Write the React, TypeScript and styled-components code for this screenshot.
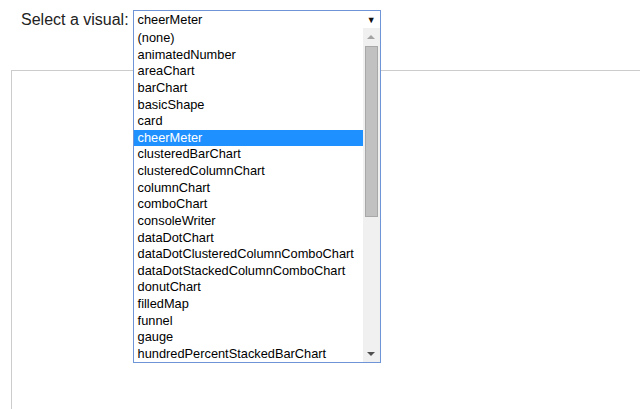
import React from "react";
import styled, { createGlobalStyle } from "styled-components";

const Global = createGlobalStyle`
  html, body { margin: 0; padding: 0; background: #fff; overflow: hidden; }
  body { font-family: "Liberation Sans", Arial, sans-serif; }
`;

const Page = styled.div`
  width: 640px;
  height: 409px;
  position: relative;
  overflow: hidden;
`;

const Header = styled.div`
  display: flex;
  align-items: flex-start;
  gap: 4px;
  padding: 10px 0 0 21px;
  height: 60px;
`;

const Label = styled.label`
  font-size: 16px;
  line-height: 19px;
  color: #222;
`;

const SelectWrap = styled.div`
  position: relative;
  width: 248px;
`;

const SelectBox = styled.div`
  box-sizing: border-box;
  height: 19px;
  border: 1px solid #6f95d6;
  display: flex;
  align-items: center;
  justify-content: space-between;
  padding: 0 4px 0 4px;
  font-size: 12.8px;
  color: #000;
`;

const Caret = styled.span`
  font-size: 9px;
  color: #111;
`;

const Dropdown = styled.div`
  position: absolute;
  left: 0;
  top: 18px;
  width: 248px;
  height: 335px;
  box-sizing: border-box;
  border: 1px solid #6f95d6;
  border-top: none;
  background: #fff;
  display: flex;
  overflow: hidden;
  z-index: 2;
`;

const List = styled.ul`
  list-style: none;
  margin: 0;
  padding: 2px 0 0 0;
  flex: 1;
  overflow: hidden;
`;

const Item = styled.li<{ $selected?: boolean }>`
  height: 16.63px;
  line-height: 16.63px;
  font-size: 12.8px;
  padding-left: 4px;
  white-space: nowrap;
  color: ${(p) => (p.$selected ? "#fff" : "#000")};
  background: ${(p) => (p.$selected ? "#1e90ff" : "transparent")};
`;

const Scrollbar = styled.div`
  width: 17px;
  background: #f0f0f0;
  display: flex;
  flex-direction: column;
  align-items: center;
`;

const ArrowBtn = styled.div<{ $down?: boolean }>`
  height: 17px;
  width: 17px;
  display: flex;
  align-items: center;
  justify-content: center;
  &::after {
    content: "";
    width: 0;
    height: 0;
    border-left: 4px solid transparent;
    border-right: 4px solid transparent;
    ${(p) =>
      p.$down
        ? "border-top: 4px solid #505050;"
        : "border-bottom: 4px solid #a3a3a3;"}
  }
`;

const Track = styled.div`
  flex: 1;
  width: 100%;
  display: flex;
  justify-content: center;
  padding-top: 1px;
`;

const Thumb = styled.div`
  width: 13px;
  height: 171px;
  box-sizing: border-box;
  background: #c1c1c1;
  border: 1px solid #a8a8a8;
`;

const Panel = styled.div`
  margin-left: 11px;
  width: 700px;
  height: 400px;
  border-top: 1px solid #cccccc;
  border-left: 1px solid #cccccc;
`;

const items = [
  "(none)",
  "animatedNumber",
  "areaChart",
  "barChart",
  "basicShape",
  "card",
  "cheerMeter",
  "clusteredBarChart",
  "clusteredColumnChart",
  "columnChart",
  "comboChart",
  "consoleWriter",
  "dataDotChart",
  "dataDotClusteredColumnComboChart",
  "dataDotStackedColumnComboChart",
  "donutChart",
  "filledMap",
  "funnel",
  "gauge",
  "hundredPercentStackedBarChart",
];

export default function App() {
  return (
    <Page>
      <Global />
      <Header>
        <Label>Select a visual:</Label>
        <SelectWrap>
          <SelectBox>
            <span>cheerMeter</span>
            <Caret>▼</Caret>
          </SelectBox>
          <Dropdown>
            <List>
              {items.map((it) => (
                <Item key={it} $selected={it === "cheerMeter"}>
                  {it}
                </Item>
              ))}
            </List>
            <Scrollbar>
              <ArrowBtn />
              <Track>
                <Thumb />
              </Track>
              <ArrowBtn $down />
            </Scrollbar>
          </Dropdown>
        </SelectWrap>
      </Header>
      <Panel />
    </Page>
  );
}
